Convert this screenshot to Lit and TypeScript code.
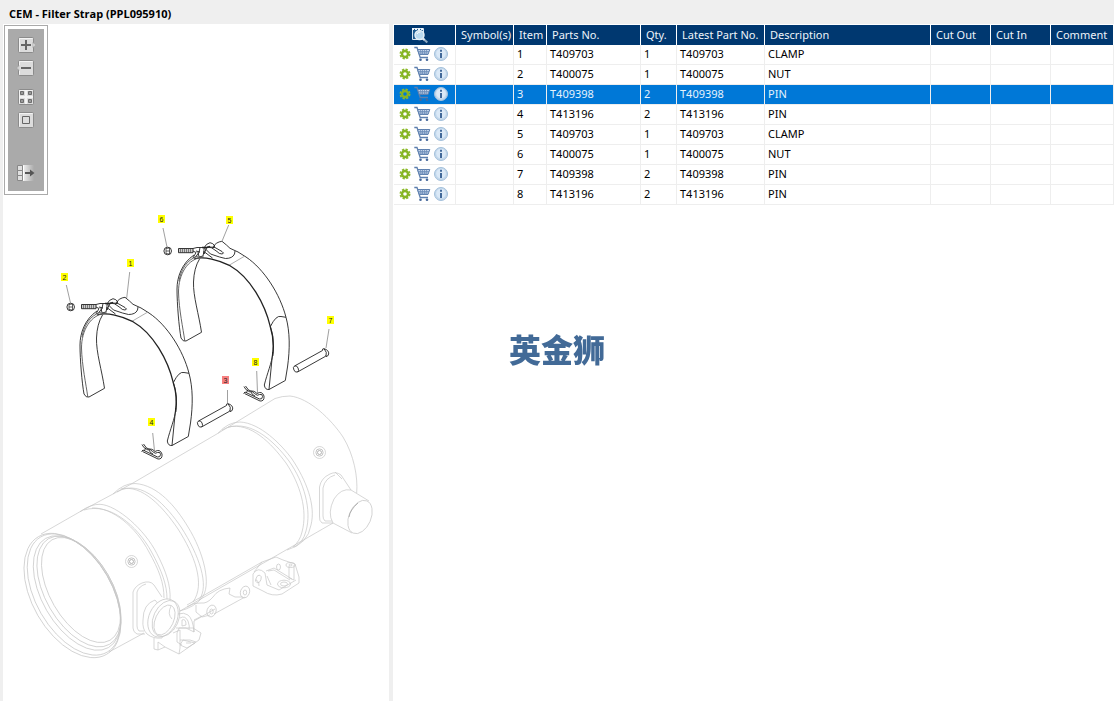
import { LitElement, html, svg, css } from "lit";
import { customElement, state } from "lit/decorators.js";
import { classMap } from "lit/directives/class-map.js";

interface Part {
  item: number;
  no: string;
  qty: number;
  text: string;
}

const PARTS: Part[] = [
  { item: 1, no: "T409703", qty: 1, text: "CLAMP" },
  { item: 2, no: "T400075", qty: 1, text: "NUT" },
  { item: 3, no: "T409398", qty: 2, text: "PIN" },
  { item: 4, no: "T413196", qty: 2, text: "PIN" },
  { item: 5, no: "T409703", qty: 1, text: "CLAMP" },
  { item: 6, no: "T400075", qty: 1, text: "NUT" },
  { item: 7, no: "T409398", qty: 2, text: "PIN" },
  { item: 8, no: "T413196", qty: 2, text: "PIN" },
];

/* Callout boxes with the leader line that ties each to its part */
const CALLOUTS = [
  { n: 1, x: 127, y: 259, line: "M129.7 272L126.7 298" },
  { n: 2, x: 61, y: 273, line: "M66.300 285L70.500 303" },
  { n: 3, x: 222, y: 376, line: "M227.500 390V403" },
  { n: 4, x: 148, y: 418, line: "M152.700 433L154.500 451" },
  { n: 5, x: 226, y: 216, line: "M228.700 225L221.700 242" },
  { n: 6, x: 158, y: 215, line: "M163 228L167 247" },
  { n: 7, x: 327, y: 316, line: "M329 329L326 348" },
  { n: 8, x: 252, y: 358, line: "M256.700 371L257.500 393" },
];

const gearIcon = html`<svg width="12" height="12" viewBox="0 0 12 12">
  <circle cx="6" cy="6" r="4.7" fill="none" stroke="#8cba2c" stroke-width="1.6" stroke-dasharray="2.3 1.39" />
  <circle cx="6" cy="6" r="3" fill="none" stroke="#86b524" stroke-width="2.4" />
</svg>`;

const cartIcon = html`<svg width="17" height="16" viewBox="0 0 17 16" fill="none">
  <path d="M0.300 1.500H3L6.200 11.500H14" stroke="#5d7fae" stroke-width="1.300" />
  <path d="M3.600 3.500H15.800L14 8.500H5.300Z" fill="#c5d5ea" stroke="#5d7fae" />
  <path d="M6.500 3.500L7 8.500M8.500 3.500V8.500M10.500 3.500V8.500M12.700 3.500L12 8.500M4 5.500H15M4.800 7H14.300" stroke="#6d8db9" stroke-width=".8" />
  <circle cx="6.500" cy="13.700" r="1.300" fill="#46689b" />
  <circle cx="13" cy="13.700" r="1.300" fill="#46689b" />
</svg>`;

const infoIcon = html`<svg width="14" height="14" viewBox="0 0 14 14">
  <circle cx="7" cy="7" r="6.500" fill="#c3d8ec" stroke="#a3bfda" />
  <circle cx="7" cy="6.500" r="4.800" fill="#dbe9f7" />
  <path d="M6 2.700h2v2H6zM6 6h2v5H6z" fill="#41699a" />
</svg>`;

const findIcon = html`<svg width="18" height="17" viewBox="0 0 18 17">
  <path d="M1.500 1.500h11v11h-11z" fill="#1d5a90" stroke="#d7e5f2" />
  <path d="M1 2h12" stroke="#eef5fb" stroke-width="2" stroke-dasharray="2 1" />
  <circle cx="8.500" cy="8" r="4.500" fill="#b9d9ef" stroke="#e3eef6" stroke-width="1.500" />
  <path d="M6 7q1-2.500 3.500-2" stroke="#fff" fill="none" />
  <path d="M12 11.500l4.300 4" stroke="#8fa9c0" stroke-width="2" />
  <path d="M11.500 11l2 2" stroke="#dbe7f2" stroke-width="2" />
</svg>`;

const key = svg`<rect x="1.500" y="1.500" width="15" height="15" rx="1" fill="#dcdcdc" stroke="#8b8b8b"/>
  <path d="M2.500 15.500v-13h13" stroke="#f3f3f3" fill="none"/>`;

const plusIcon = html`<svg width="20" height="18" viewBox="0 0 20 18">
  ${key}<path d="M16 6.500l2.500 2.500l-2.500 2.500z" fill="#e8e8e8" stroke="#999" stroke-width=".6" />
  <path d="M4 9h10M9 4v10" stroke="#666" stroke-width="2" />
</svg>`;
const minusIcon = html`<svg width="20" height="18" viewBox="0 0 20 18" overflow="visible">
  ${key}<path d="M2 6.500l-2.200 2.500l2.200 2.500z" fill="#e8e8e8" stroke="#999" stroke-width=".6" />
  <path d="M4 9h10" stroke="#666" stroke-width="2" />
</svg>`;
const tilesIcon = html`<svg width="20" height="18" viewBox="0 0 20 18">
  ${key}<path d="M3.500 3.500h3v3h-3zM11.500 3.500h3v3h-3zM3.500 11.500h3v3h-3zM11.500 11.500h3v3h-3z" fill="#999" stroke="#6d6d6d" />
  <path d="M9 2v14M2 9h14" stroke="#f4f4f4" stroke-width="2" />
</svg>`;
const fitIcon = html`<svg width="20" height="18" viewBox="0 0 20 18">
  ${key}<path d="M5.500 5.500h7v7h-7z" fill="#ddd" stroke="#666" />
</svg>`;
const exportIcon = html`<svg width="20" height="18" viewBox="0 0 20 18">
  <defs><linearGradient id="fade"><stop stop-color="#f0f0f0" /><stop offset="1" stop-color="#aaa" /></linearGradient></defs>
  <path d="M6 1h11v16H6z" fill="url(#fade)" />
  <path d="M.5 1.500h5v5h-5zM.5 6.500h5v5h-5zM.5 11.500h5v5h-5z" fill="#e0e0e0" stroke="#888" />
  <path d="M6.500 1.500v15" stroke="#fff" />
  <path d="M8 9h6" stroke="#555" stroke-width="2" />
  <path d="M13 5.500L17.500 9L13 12.500z" fill="#555" />
</svg>`;

const clamp = svg`
  <circle cx="70.700" cy="307" r="3.800"/>
  <path d="M69 304.500l3.500-.5v6l-3.500-.5zM69 307h3.500" stroke-width=".7"/>
  <path d="M81.500 304.500H96V308.700H81.500z" fill="#ccc"/>
  <path d="M83.500 305v3.500M85.500 305v3.500M87.500 305v3.500M89.500 305v3.500M91.500 305v3.500M93.500 305v3.500" stroke-width=".5"/>
  <path d="M96 304.500L100 303.500H107M96 307L99 308.500L96 314M99 307l4 1M103 303.500l-1 5l-4 5M101 308l1 5l4-1l1-5"/>
  <path d="M107 310V304Q109 299.500 113 298.700Q116 299 118 302L116 304L110 303z"/>
  <path d="M116 303q3-5 9-5.700q5 4 8 7q8 3 16 8.700"/>
  <path d="M113 303l5 .5l7 4q3 2 0 2.500q-3 0-5-2.500l-5-3.500M107.500 304l6 6l9 3l6 1.500q7 0 9-4.500l.5-3M107.500 308l8 6"/>
  <path d="M105 303.500h5l3-1" stroke-width="1.400"/>
  <path d="M132.500 321L147 312.500" stroke-width=".6" stroke="#777"/>
  <path d="M149 313C167 325 183 350 189 373.300C193 388 193 405 190.500 423L188.300 436.500L172 445.500Q168 446 167.300 441C170 430 175 418 175.700 410C177 398 176 390 173.300 382.700"/>
  <path d="M173.300 382.700Q179 371 184 372.500L189 373.300M172 445.500L175.700 408"/>
  <path d="M97 315C107 312 122 316 133 321.700C153 333 168 360 173.300 382.700C177 394 177 402 175.700 412" stroke-width="1.300"/>
  <path d="M97 311C85 319 80 333 80 345C80 360 82 383 84 394Q86 398 89 397L104.500 388.300C102 371 96 352 96.500 338Q97 324 102.500 315"/>
  <path d="M107 313C90 314 81.500 331 81.500 348C82 366 86 384 87.800 397M101 312C89 316 84 326 82 337" stroke="#555"/>`;

const nail = svg`
  <path d="M198.500 421L226.500 405.500M201.500 427L229.500 411.300" />
  <ellipse cx="200" cy="424" rx="2.300" ry="3.300" transform="rotate(-25 200 424)" stroke-width=".8"/>
  <path d="M226.500 405.500Q226 403.500 228 403.700Q233 405 232.700 409Q232 411.700 230 411.500L229.500 410.500M228 403.700Q231.500 407 230 411.500"/>`;

const cotter = svg`
  <path d="M142 444.500Q143 448 148 450Q151 447.500 155 451.500Q160 448.500 162 454Q162.500 459.500 158 459L142.500 451.500" />
  <path d="M143.500 444l3 4q4 1 6 3.500q3 3 5 1q3-1 3 2q0 3-3 2.500L143 450l-1.500 1.500M146 448l-2 3M149 450q1 3 4 4" />`;

const sensor = (x: number, y: number) => svg`<g transform="translate(${x} ${y})">
  <circle r="6"/><circle r="3.600" stroke="#aaa"/><circle r="2" stroke="#999"/></g>`;

/* The canister: shell, end rings, straps' seats, two ports and the foot */
const canister = svg`
  <ellipse cx="72.500" cy="595.500" rx="68" ry="40" transform="rotate(60 72.500 595.500)"/>
  <ellipse cx="74" cy="594.500" rx="66.500" ry="38" transform="rotate(60 74 594.500)"/>
  <ellipse cx="77" cy="593" rx="63" ry="35" transform="rotate(60 77 593)"/>
  <ellipse cx="79" cy="591.500" rx="61" ry="33.500" transform="rotate(60 79 591.500)"/>
  <ellipse cx="81" cy="590" rx="58" ry="31" transform="rotate(60 81 590)"/>
  <path d="M41 534L80 511.700L113 494L133 483L218 433.300L275 398.500"/>
  <path d="M80 511.700Q91 504 100 504.300C117 505 145 530 156.700 553.300C166 571 171 586 170 600M84 510C110 502 137 526 151 551C162 571 167 585 167 599M92 508C112 507 136 527 149 552C159 570 164 583 164 598"/>
  <path d="M113 494Q124 483 135 483.500C158 485 176 507 188 527C203 551 213 586 201 599Q194 607 180 611M117 492C142 477 168 508 181 527C199 555 210 586 199 600M121 489C142 484 163 507 178 529C194 554 206 584 193 602"/>
  <path d="M218 433.300Q228 422 240 422C260 423 281 444 292 459C306 480 316 505 311 525Q308 544 287 550M222 430C248 416 274 441 289 461C304 482 312 510 306 531Q303 543 294 547M228 427C251 422 271 443 286 463C300 484 308 510 302 532Q300 541 293 547"/>
  <path d="M275 398.500Q282 396 290 396C309 398 331 419 343 437C354 455 358 477 356.700 493"/>
  <path d="M109 652L144 633M180 611L333 523"/>
  ${sensor(131.5, 561.5)}
  ${sensor(319.5, 452.5)}
  <path d="M333 523h-11q-3-2-2.500-7V487Q321 478 330 474Q336 471 341 475L351 490M332 521h-7q-2-2-2-5V488Q325 478 335 475M335 472l7 7"/>
  <path d="M351 490Q341 488 334 499Q327 513 333 523L352 533M351 490L369 501" fill="#fff"/>
  <ellipse cx="360" cy="517" rx="11" ry="17.500" transform="rotate(23 360 517)" fill="#fff"/>
  <path d="M349 517q1-7 9-14" stroke="#999"/>
  <path d="M145 634h-8q-4-2-4-6V592Q135 586 142 583Q150 580 154 585L162 597M144 631h-5q-2-2-2-5V592Q139 586 146 584"/>
  <path d="M155 600Q143 604 143 620Q142 629 147 634Q153 639 162 638L170 618z" fill="#fff"/>
  <ellipse cx="163" cy="618" rx="14" ry="20" transform="rotate(25 163 618)" fill="#fff"/>
  <ellipse cx="166" cy="618.500" rx="12.500" ry="19" transform="rotate(25 166 618.500)"/>
  <ellipse cx="164.500" cy="620" rx="9" ry="16" transform="rotate(25 164.500 620)"/>
  <path d="M171 606q-4 8 1 13"/>
  <path d="M154 638v11l4 1l7-3l14 7l20-14l2-7l-8-5h-14l-2 5v9l5 3M158 642v8M158 642l7 5M173 633l7-3v18l-1 6M180 640h10l6 2M183 640l-3 5l7 3l8-5zM186 643h5"/>
  <path d="M178 614q6-2 10 1q5 4 6 17l-8-4h-10M180 618q5-3 8 3q2 6 1 8M182 620q4-2 4 5l-4 1zM194 632v-11l21-12"/>
  <path d="M187 607q7-5 14-4q6 1 12-6q5-8 17-9M196 605v7l6 5l8-2M230 588l-1 6l6 3h8M214 614L245 597M194 620l8-4"/>
  <ellipse cx="211.500" cy="611" rx="4.500" ry="6" transform="rotate(20 211.500 611)"/>
  <ellipse cx="211.500" cy="611.500" rx="1.700" ry="2.500"/>
  <ellipse cx="245" cy="592" rx="4.500" ry="6" transform="rotate(20 245 592)"/>
  <ellipse cx="245" cy="592.500" rx="1.700" ry="2.500"/>
  <path d="M187 605L262 562L276 557L283 560L295 564L299 577V583L282 594Q272 597 263 591L253 586V574Q258 566 265 573L267 585L279 590L296 580"/>
  <path d="M262 562l-8 10M266 571l8-3l18 11M268 571l6-1l16 10M289 566v12l5 2v-15M267 576l4 9M255 580q4 0 4 6"/>
  <ellipse cx="258.500" cy="579" rx="2.500" ry="4" transform="rotate(20 258.500 579)"/>
  <ellipse cx="284" cy="584" rx="6.500" ry="3.800"/><ellipse cx="284" cy="584" rx="3.500" ry="2"/>
  <ellipse cx="290.500" cy="565" rx="4.500" ry="2.500"/><ellipse cx="290.500" cy="565" rx="1.500" ry="1"/>
  <ellipse cx="278.500" cy="567" rx="2" ry="3"/>`;

@customElement("app-root")
export class AppRoot extends LitElement {
  @state() private selected = 3;

  static styles = css`
    :host {
      display: flex;
      flex-direction: column;
      min-height: 100vh;
      background: #efefef;
      color: #000;
      font: 11px/14px "Noto Sans", "Open Sans", sans-serif;
    }
    .title {
      margin: 0;
      padding: 7px 9px 3px;
      font-family: "Open Sans", "Noto Sans", sans-serif;
      font-size: 11px;
      line-height: 14px;
      font-weight: 700;
    }
    .panes {
      flex: 1;
      display: flex;
      gap: 4px;
      padding-left: 3px;
    }
    .drawing {
      position: relative;
      flex: 0 0 386px;
      background: #fff;
    }
    .sheet {
      display: block;
      width: 100%;
    }
    .callout {
      cursor: pointer;
    }
    .callout rect {
      fill: #ff0;
    }
    .callout.on rect {
      fill: #f88080;
    }
    .callout text {
      font: 7px "Liberation Sans", sans-serif;
      text-anchor: middle;
      fill: #222;
    }
    .tools {
      position: absolute;
      left: 1px;
      top: 1px;
      padding: 3px;
      background: #fff;
      border: 1px solid #aaa;
    }
    .stack {
      display: flex;
      flex-direction: column;
      gap: 5px;
      padding: 7px 7px 9px 9px;
      background: #aaa;
    }
    button {
      display: flex;
      padding: 0;
      border: 0;
      background: none;
      cursor: pointer;
    }
    .group {
      margin-top: 6px;
    }
    .far {
      margin-top: 30px;
    }
    .list {
      flex: 1;
      min-width: 0;
      padding: 1px 0 0 1px;
      overflow: hidden;
      background: #fff;
    }
    table {
      width: 100%;
      table-layout: fixed;
      border-spacing: 0;
    }
    th,
    td {
      box-sizing: border-box;
      height: 20px;
      padding: 0 0 0 3px;
      border-right: 1px solid #eee;
      text-align: left;
      white-space: nowrap;
    }
    td {
      padding-bottom: 2px;
      border-bottom: 1px solid #eee;
    }
    th {
      padding-left: 5px;
      border-color: #fff;
      background: #003870;
      color: #eef4fa;
      font-weight: 400;
    }
    .find {
      padding-left: 12px;
    }
    .on td {
      background: #0078d7;
      color: #e6f2fc;
    }
    .actions {
      display: flex;
      align-items: center;
      gap: 3px;
      padding-left: 2px;
    }
    .w-act { width: 62px; }
    .w-sym { width: 58px; }
    .w-item { width: 33px; }
    .w-no { width: 94px; }
    .w-qty { width: 36px; }
    .w-latest { width: 88px; }
    .w-desc { width: 166px; }
    .w-cut { width: 60px; }
    .mark {
      position: fixed;
      left: 50%;
      top: 50%;
      transform: translate(-50%, -50%);
      padding-bottom: 6px;
      color: #426a97;
      font: 900 32px/32px "Noto Sans CJK SC", sans-serif;
      white-space: nowrap;
      pointer-events: none;
    }
  `;

  private pick(n: number) {
    this.selected = n;
  }

  private renderSheet() {
    return html`<svg class="sheet" viewBox="3 24 386 677" fill="none" stroke-linejoin="round">
      <g stroke="#c6c6c6" stroke-width=".7">${canister}</g>
      <g stroke="#222" stroke-width=".9">
        ${clamp}
        <g transform="translate(97 -56)">${clamp}</g>
        ${nail}
        <g transform="translate(96 -55)">${nail}</g>
        ${cotter}
        <g transform="translate(102 -58)">${cotter}</g>
      </g>
      ${CALLOUTS.map(
        (c) => svg`<g class=${classMap({ callout: true, on: c.n === this.selected })} @click=${() => this.pick(c.n)}>
          <path d=${c.line} stroke="#888" stroke-width=".8"/>
          <rect x=${c.x} y=${c.y} width="7" height="8"/>
          <text x=${c.x + 3.5} y=${c.y + 7}>${c.n}</text>
        </g>`
      )}
    </svg>`;
  }

  private renderRow(p: Part) {
    return html`<tr class=${classMap({ on: p.item === this.selected })} @click=${() => this.pick(p.item)}>
      <td>
        <div class="actions">
          <button aria-label="Options">${gearIcon}</button>
          <button aria-label="Add to cart">${cartIcon}</button>
          <button aria-label="Information">${infoIcon}</button>
        </div>
      </td>
      <td></td>
      <td>${p.item}</td>
      <td>${p.no}</td>
      <td>${p.qty}</td>
      <td>${p.no}</td>
      <td>${p.text}</td>
      <td></td>
      <td></td>
      <td></td>
    </tr>`;
  }

  render() {
    return html`
      <h1 class="title">CEM - Filter Strap (PPL095910)</h1>
      <div class="panes">
        <section class="drawing">
          ${this.renderSheet()}
          <div class="tools">
            <div class="stack">
              <button aria-label="Zoom in">${plusIcon}</button>
              <button aria-label="Zoom out">${minusIcon}</button>
              <button class="group" aria-label="Tiles">${tilesIcon}</button>
              <button aria-label="Fit">${fitIcon}</button>
              <button class="far" aria-label="Show list">${exportIcon}</button>
            </div>
          </div>
        </section>
        <section class="list">
          <table>
            <thead>
              <tr>
                <th class="w-act"><button class="find" aria-label="Find part">${findIcon}</button></th>
                <th class="w-sym">Symbol(s)</th>
                <th class="w-item">Item</th>
                <th class="w-no">Parts No.</th>
                <th class="w-qty">Qty.</th>
                <th class="w-latest">Latest Part No.</th>
                <th class="w-desc">Description</th>
                <th class="w-cut">Cut Out</th>
                <th class="w-cut">Cut In</th>
                <th>Comment</th>
              </tr>
            </thead>
            <tbody>
              ${PARTS.map((p) => this.renderRow(p))}
            </tbody>
          </table>
        </section>
      </div>
      <div class="mark">英金狮</div>
    `;
  }
}
